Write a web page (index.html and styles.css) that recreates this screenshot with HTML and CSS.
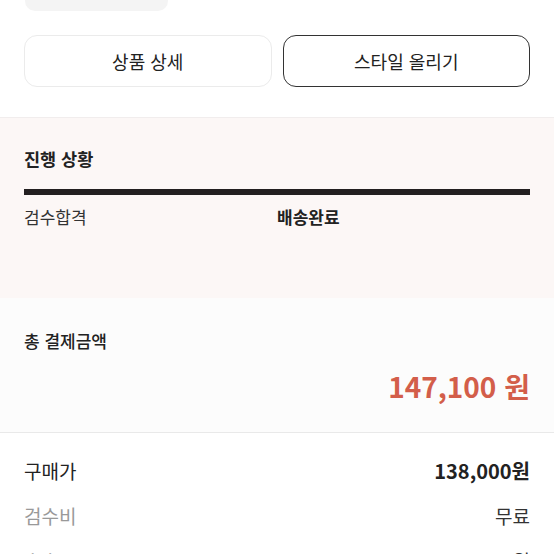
FILE: index.html
```html
<!DOCTYPE html>
<html lang="ko">
<head>
<meta charset="utf-8">
<link rel="stylesheet" href="styles.css">
</head>
<body>
<div class="page">
  <div class="top-chip"></div>
  <div class="actions">
    <button class="btn btn-light">상품 상세</button>
    <button class="btn btn-dark">스타일 올리기</button>
  </div>

  <section class="progress">
    <h2 class="section-title">진행 상황</h2>
    <div class="bar"></div>
    <div class="steps">
      <span class="step">검수합격</span>
      <span class="step step-current">배송완료</span>
    </div>
  </section>

  <section class="total">
    <h2 class="section-title">총 결제금액</h2>
    <div class="total-amount">147,100 원</div>
  </section>

  <section class="breakdown">
    <div class="row"><span class="label">구매가</span><span class="value value-strong">138,000원</span></div>
    <div class="row"><span class="label label-muted">검수비</span><span class="value">무료</span></div>
    <div class="row"><span class="label label-muted">수수료</span><span class="value">1,100원</span></div>
  </section>
</div>
</body>
</html>
```

FILE: styles.css
```css
* { box-sizing: border-box; }
html, body { margin: 0; padding: 0; background: #fff; }
body {
  font-family: "Noto Sans CJK KR", "Noto Sans", sans-serif;
  color: #222;
}
.page { width: 554px; height: 554px; overflow: hidden; }

.top-chip {
  margin-left: 25px;
  width: 143px;
  height: 11px;
  background: #f4f4f4;
  border-radius: 0 0 10px 10px;
}

.actions {
  display: grid;
  grid-template-columns: 1fr 1fr;
  gap: 11px;
  padding: 24px 24px 30px 24px;
  border-bottom: 1px solid #f1eded;
}
.btn {
  height: 52px;
  border-radius: 13px;
  background: #fff;
  font-family: inherit;
  font-size: 18px;
  color: #222;
  padding: 0;
}
.btn-light { border: 1px solid #ebebeb; }
.btn-dark { border: 1.5px solid #333; }

.progress {
  background: #fcf7f6;
  padding: 29px 24px 0 24px;
  height: 180px;
}
.section-title {
  margin: 0;
  font-size: 17.5px;
  font-weight: 700;
  line-height: 24px;
  color: #222;
}
.bar {
  margin-top: 18px;
  height: 6px;
  background: #231f20;
}
.steps {
  display: grid;
  grid-template-columns: 1fr 1fr;
  margin-top: 10px;
  font-size: 17px;
  line-height: 24px;
  color: #333;
}
.step-current { font-weight: 700; color: #222; }

.total {
  background: #fcfcfc;
  padding: 31px 24px 0 24px;
  height: 135px;
  border-bottom: 1px solid #e9e9e9;
}
.total .section-title { font-weight: 500; font-size: 17px; }
.total-amount {
  margin-top: 15px;
  text-align: right;
  font-size: 28px;
  line-height: 36px;
  font-weight: 700;
  color: #d35e4a;
}

.breakdown { padding: 15px 24px 0 24px; }
.row {
  display: flex;
  justify-content: space-between;
  align-items: center;
  height: 45px;
  font-size: 19px;
}
.label { color: #222; }
.label-muted { color: #999; }
.value { color: #333; }
.value-strong { font-weight: 700; color: #222; font-size: 20px; }
```
